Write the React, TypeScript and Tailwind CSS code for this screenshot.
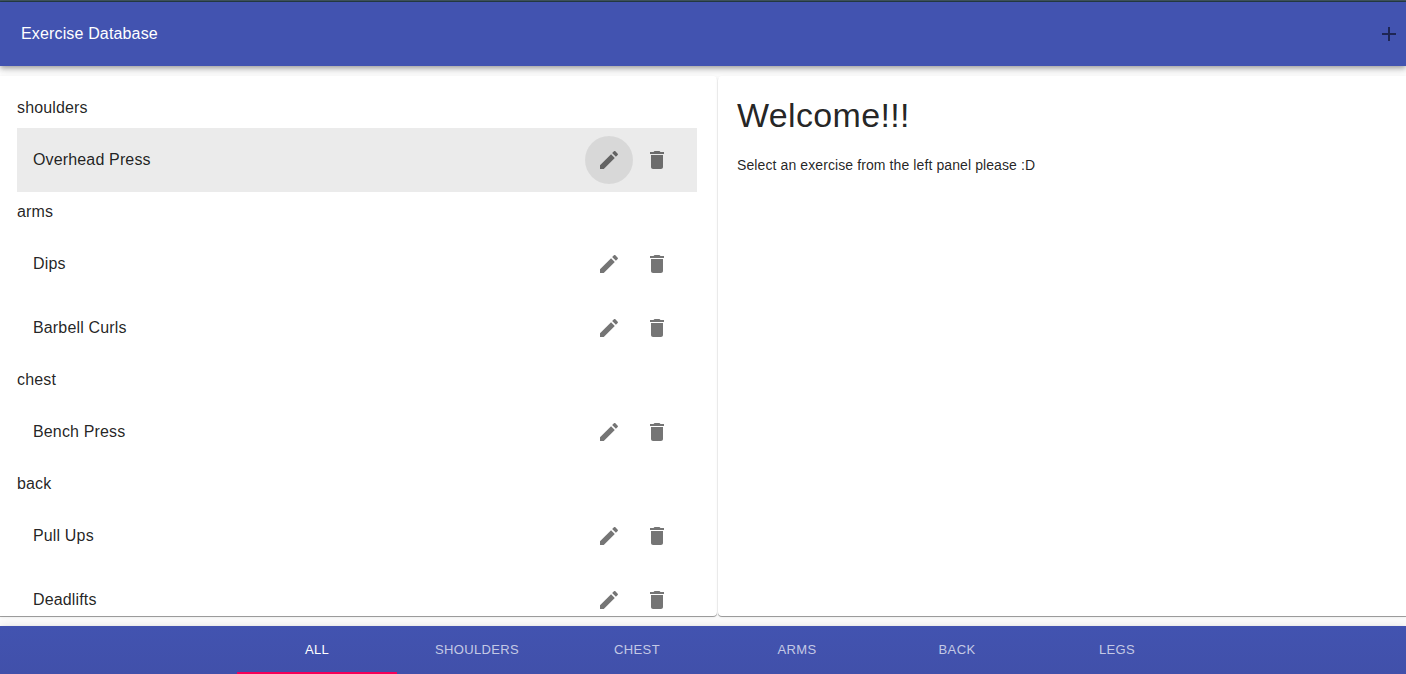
type Group = { name: string; items: string[] };

const groups: Group[] = [
  { name: 'shoulders', items: ['Overhead Press'] },
  { name: 'arms', items: ['Dips', 'Barbell Curls'] },
  { name: 'chest', items: ['Bench Press'] },
  { name: 'back', items: ['Pull Ups', 'Deadlifts'] },
];

const tabs = ['ALL', 'SHOULDERS', 'CHEST', 'ARMS', 'BACK', 'LEGS'];

const icons = {
  edit: 'M3 17.25V21h3.75L17.81 9.94l-3.75-3.75L3 17.25zM20.71 7.04c.39-.39.39-1.02 0-1.41l-2.34-2.34c-.39-.39-1.02-.39-1.41 0l-1.83 1.83 3.75 3.75 1.83-1.83z',
  remove: 'M6 19c0 1.1.9 2 2 2h8c1.1 0 2-.9 2-2V7H6v12zM19 4h-3.5l-1-1h-5l-1 1H5v2h14V4z',
  add: 'M19 13h-6v6h-2v-6H5v-2h6V5h2v6h6v2z',
};

function Icon({ d }: { d: string }) {
  return (
    <svg viewBox="0 0 24 24" className="block size-6 shrink-0 fill-current">
      <path d={d} />
    </svg>
  );
}

function Row({ name, active }: { name: string; active: boolean }) {
  return (
    <li className={`flex h-16 items-center pr-4 pl-4 ${active ? 'bg-[#ebebeb]' : ''}`}>
      <span className="flex-1 text-base tracking-[0.15px]">{name}</span>
      <button
        aria-label="Edit"
        className={`flex size-12 items-center justify-center rounded-full text-black/54 ${active ? 'bg-black/8' : ''}`}
      >
        <Icon d={icons.edit} />
      </button>
      <button aria-label="Delete" className="flex size-12 items-center justify-center rounded-full text-black/54">
        <Icon d={icons.remove} />
      </button>
    </li>
  );
}

const paper = 'bg-white shadow-[0_1px_0_0_rgba(0,0,0,0.34),0_1px_3px_0_rgba(0,0,0,0.1)]';

export default function App() {
  return (
    <div className="flex h-[674px] w-[1406px] flex-col overflow-hidden bg-[#fcfcfc] font-['Liberation_Sans',Arial,sans-serif] text-black/87">
      <div className="h-0.5 shrink-0 border-b border-[#263d46] bg-[#40545e]" />
      <header className="flex h-16 shrink-0 items-center justify-between bg-[#4253b0] pr-[5px] pl-[21px] shadow-[0_2px_4px_-1px_rgba(0,0,0,0.2),0_4px_5px_0_rgba(0,0,0,0.14),0_1px_10px_0_rgba(0,0,0,0.12)]">
        <h1 className="text-base tracking-[0.15px] text-white">Exercise Database</h1>
        <button aria-label="Add exercise" className="text-[#1e2654]">
          <Icon d={icons.add} />
        </button>
      </header>
      <main className="mt-2.5 flex h-[540px] shrink-0">
        <section className={`w-[717px] rounded-r-[4px] ${paper}`}>
          <div className="h-full overflow-hidden pt-3 pr-5 pl-[17px]">
            {groups.map((group) => (
              <div key={group.name}>
                <h2 className="flex h-10 items-center text-base tracking-[0.15px]">{group.name}</h2>
                <ul>
                  {group.items.map((item) => (
                    <Row key={item} name={item} active={item === 'Overhead Press'} />
                  ))}
                </ul>
              </div>
            ))}
          </div>
        </section>
        <section className={`ml-px flex-1 rounded-l-[4px] pt-[19px] pl-[19px] ${paper}`}>
          <h2 className="text-[34px] leading-10 tracking-[0.33px]">Welcome!!!</h2>
          <p className="mt-5 text-sm tracking-[0.1px]">Select an exercise from the left panel please :D</p>
        </section>
      </main>
      <nav className="mt-2.5 flex h-12 shrink-0 bg-linear-to-b from-[#4253b0] to-[#4150aa] pl-[237px] shadow-[0_2px_4px_-1px_rgba(0,0,0,0.2),0_4px_5px_0_rgba(0,0,0,0.14),0_1px_10px_0_rgba(0,0,0,0.12)]">
        {tabs.map((tab, i) => (
          <button
            key={tab}
            className={`flex w-40 items-center justify-center border-b-2 pt-0.5 text-[13px] tracking-[0.37px] ${
              i === 0 ? 'border-[#f50057] text-white' : 'border-transparent text-white/70'
            }`}
          >
            {tab}
          </button>
        ))}
      </nav>
    </div>
  );
}
